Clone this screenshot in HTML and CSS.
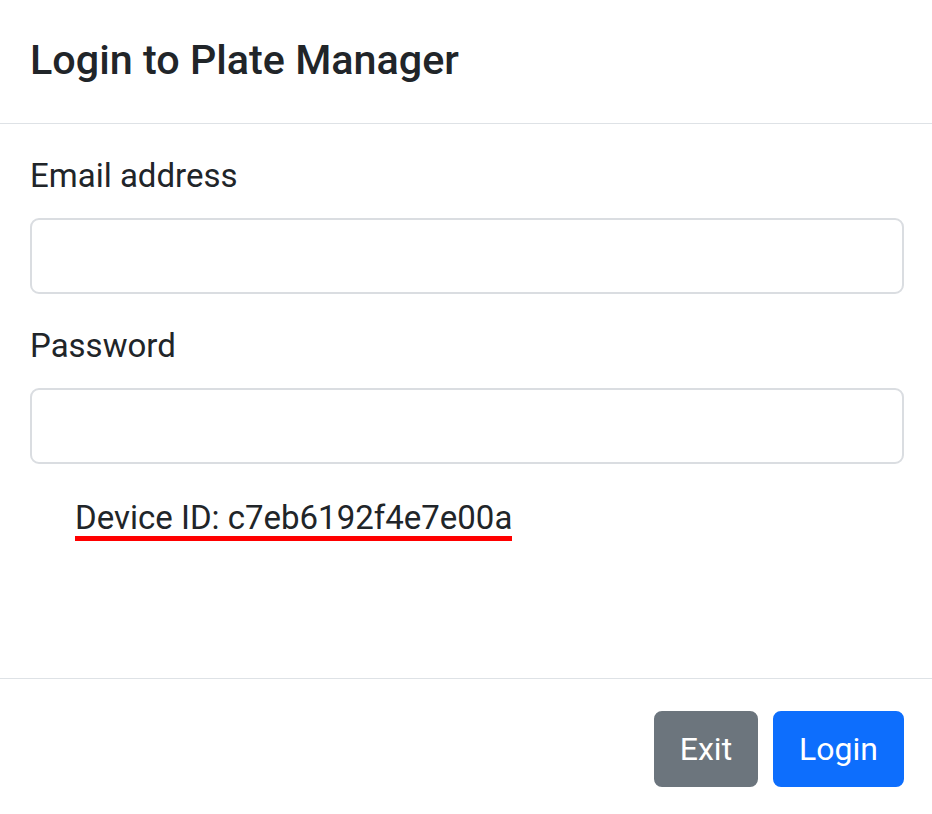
FILE: index.html
```html
<!DOCTYPE html>
<html lang="en">
<head>
<meta charset="utf-8">
<title>Login to Plate Manager</title>
<link rel="stylesheet" href="styles.css">
</head>
<body>
<div class="modal">
  <div class="modal-header">
    <h5 class="modal-title">Login to Plate Manager</h5>
  </div>
  <div class="modal-body">
    <div class="field">
      <label class="form-label" for="email">Email address</label>
      <input class="form-control" id="email" type="email">
    </div>
    <div class="field">
      <label class="form-label" for="password">Password</label>
      <input class="form-control" id="password" type="password">
    </div>
    <div class="device"><span class="device-id">Device ID: c7eb6192f4e7e00a</span></div>
  </div>
  <div class="modal-footer">
    <button class="btn btn-secondary" type="button">Exit</button>
    <button class="btn btn-primary" type="button">Login</button>
  </div>
</div>
</body>
</html>
```
FILE: styles.css
```css
* { box-sizing: border-box; }
html, body { margin: 0; padding: 0; background: #fff; }
body {
  font-family: Roboto, "Liberation Sans", Arial, sans-serif;
  color: #212529;
  overflow: hidden;
}
.modal {
  width: 932px;
  height: 814px;
  background: #fff;
  display: flex;
  flex-direction: column;
}
.modal-header {
  padding: 30px 30px 33px 30px;
  border-bottom: 1px solid #dee2e6;
}
.modal-title {
  margin: 0;
  font-size: 41.3px;
  font-weight: 500;
  line-height: 60px;
}
.modal-body {
  height: 554px;
  flex: none;
  padding: 30px 28px 32px 30px;
}
.field { margin-bottom: 30px; }
.form-label {
  display: block;
  font-size: 33px;
  line-height: 44px;
  margin-bottom: 20px;
}
.form-control {
  display: block;
  width: 100%;
  height: 76px;
  padding: 12px 24px;
  font-family: inherit;
  font-size: 32px;
  border: 2px solid #dadde1;
  border-radius: 9px;
  background: #fff;
  outline: none;
}
.device {
  margin: 0 0 0 45px;
  padding-top: 6px;
  font-size: 33px;
}
.device-id {
  display: block;
  width: max-content;
  line-height: 36px;
  border-bottom: 5px solid #ff0000;
}
.modal-footer {
  border-top: 1px solid #dee2e6;
  padding: 32px 28px 32px 28px;
  display: flex;
  justify-content: flex-end;
  gap: 15px;
}
.btn {
  font-family: inherit;
  font-size: 32px;
  line-height: 48px;
  padding: 12px 24px;
  border: 2px solid transparent;
  border-radius: 8px;
  color: #fff;
  cursor: pointer;
}
.btn-secondary { background: #6c757d; border-color: #6c757d; }
.btn-primary { background: #0d6efd; border-color: #0d6efd; }
```
